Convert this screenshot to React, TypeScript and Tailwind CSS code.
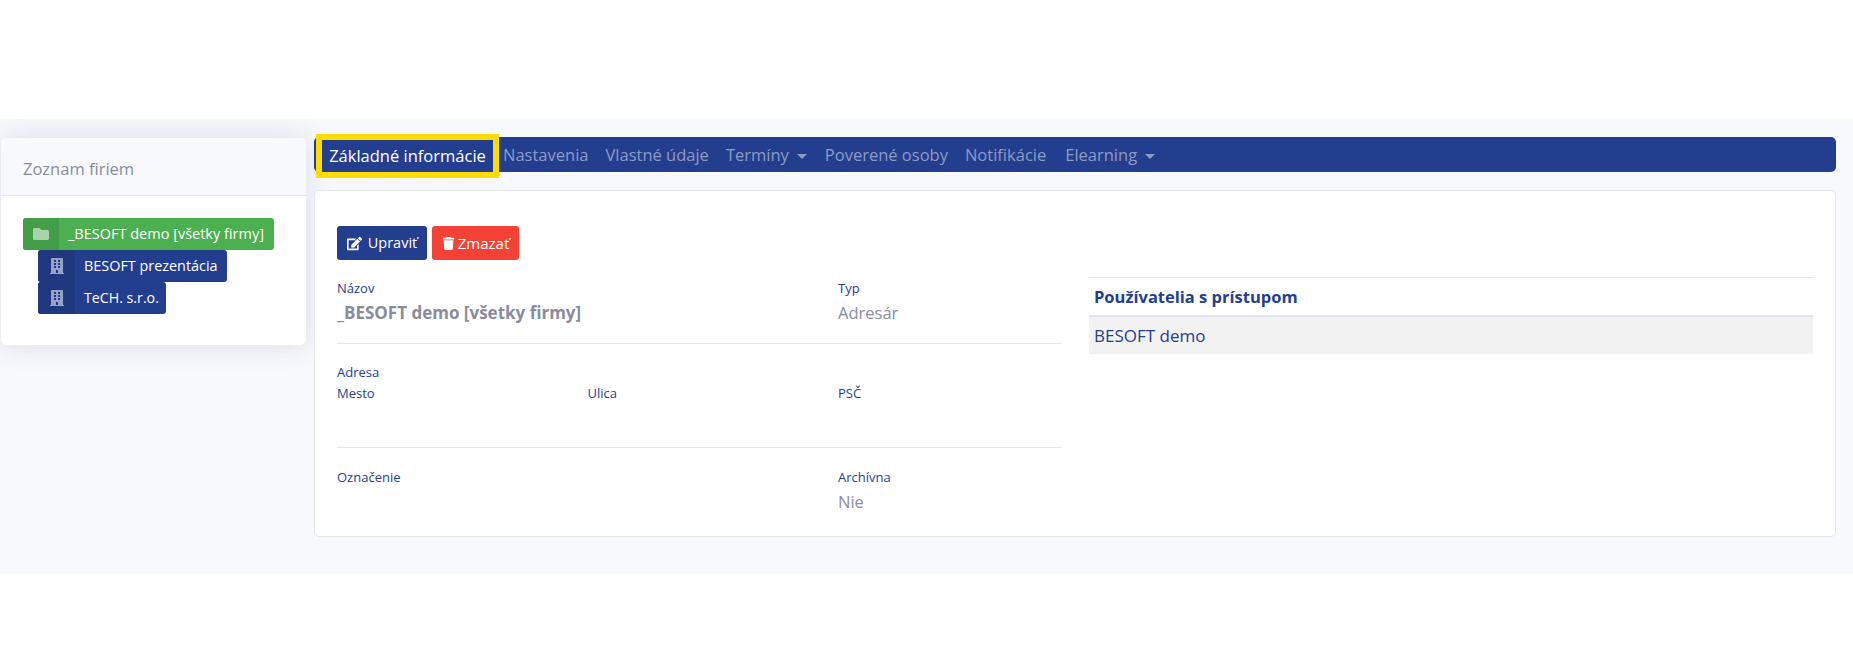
import { FaBuilding, FaEdit, FaFolder, FaTrash } from 'react-icons/fa';

const font = "font-['Open_Sans',sans-serif]";

function TreeItem({ label, green, className }: { label: string; green?: boolean; className: string }) {
  return (
    <div className={`flex h-8 items-center overflow-hidden rounded-[3px] text-white ${className}`}>
      <span className={`flex h-full items-center justify-center ${green ? 'w-9 bg-[#449d48] text-[#a9d3aa]' : 'w-[37px] bg-[#20387f] text-[#97a3c6]'}`}>
        {green ? <FaFolder className="text-[16px]" /> : <FaBuilding className="text-[16px]" />}
      </span>
      <span className="pl-[9px]">{label}</span>
    </div>
  );
}

function Field({ label, value, bold, className }: { label: string; value?: string; bold?: boolean; className?: string }) {
  return (
    <div className={className}>
      <div className="text-[13px] leading-[19px] text-[#243e8f]">{label}</div>
      {value && <div className={`leading-[29px] text-[#8a8c9c] ${bold ? 'text-[17px] font-bold' : 'text-[16.5px]'}`}>{value}</div>}
    </div>
  );
}

function Caret() {
  return <span className="ml-2 inline-block border-x-[5px] border-t-[5px] border-x-transparent border-t-[#8d9ac4] align-middle" />;
}

export default function App() {
  return (
    <div className={`min-h-[672px] bg-white pt-[119px] ${font}`}>
      <div className="flex h-[455px] items-start bg-[#f8f9fd] pl-px pr-[17px] pt-[15px]">
        {/* Zoznam firiem */}
        <aside className="mt-[4px] h-[207px] w-[305px] shrink-0 rounded-[5px] bg-white shadow-[0_0_28px_rgba(60,60,110,0.16)]">
          <div className="flex h-[58px] items-center rounded-t-[5px] border-b border-[#e4e5ef] bg-[#f8f9fd] pl-[22px] pt-[5px] text-[16.5px] text-[#8a8c9c]">
            Zoznam firiem
          </div>
          <div className="pl-[22px] pt-[22px]">
            <TreeItem className="w-[251px] bg-[#4caf50] text-[14.5px]" label="_BESOFT demo [všetky firmy]" green />
            <TreeItem className="ml-[15px] w-[189px] bg-[#243e8f] text-[14.4px]" label="BESOFT prezentácia" />
            <TreeItem className="ml-[15px] w-[128px] bg-[#243e8f] text-[14.2px]" label="TeCH. s.r.o." />
          </div>
        </aside>

        <main className="ml-[8px] flex-1">
          {/* Navbar */}
          <nav className="mt-[3px] flex h-[35px] items-center rounded-[5px] bg-[#243e8f] pl-[2px] pt-px text-[16.5px] text-[#8d9ac4]">
            <a className="mt-[2px] flex h-[44px] w-[183px] shrink-0 items-center justify-center border-[6px] border-[#ffdd00] text-white">Základné informácie</a>
            <a className="ml-[4px]">Nastavenia</a>
            <a className="ml-[17px]">Vlastné údaje</a>
            <a className="ml-[17px]">Termíny<Caret /></a>
            <a className="ml-[18px]">Poverené osoby</a>
            <a className="ml-[17px]">Notifikácie</a>
            <a className="ml-[19px]">Elearning<Caret /></a>
          </nav>

          {/* Detail */}
          <section className="mt-[18px] flex h-[347px] rounded-[5px] border border-[#e4e5ef] bg-white pl-[22px] pr-[22px] pt-[35px]">
            <div className="w-[725px] shrink-0">
              <div className="flex gap-[5px]">
                <button className="flex h-[34px] w-[90px] items-center justify-center gap-[6px] rounded-[3px] bg-[#243e8f] text-[14.5px] text-white">
                  <FaEdit className="text-[15px]" />Upraviť
                </button>
                <button className="flex h-[34px] w-[87px] items-center justify-center gap-[3px] rounded-[3px] bg-[#f44336] text-[15px] text-white">
                  <FaTrash className="text-[13px]" />Zmazať
                </button>
              </div>
              <div className="mt-[19px] grid grid-cols-[250.5px_250.5px_1fr] border-b border-[#e4e5ef] pb-[16px]">
                <Field className="col-span-2" label="Názov" value="_BESOFT demo [všetky firmy]" bold />
                <Field label="Typ" value="Adresár" />
              </div>
              <div className="border-b border-[#e4e5ef] pb-[44px] pt-[19px]">
                <Field label="Adresa" />
                <div className="mt-[2px] grid grid-cols-[250.5px_250.5px_1fr]">
                  <Field label="Mesto" />
                  <Field label="Ulica" />
                  <Field label="PSČ" />
                </div>
              </div>
              <div className="grid grid-cols-[250.5px_250.5px_1fr] pt-[20px]">
                <Field className="col-span-2" label="Označenie" />
                <Field label="Archívna" value="Nie" />
              </div>
            </div>
            <div className="ml-[27px] mt-[51px] flex-1">
              <div className="flex h-[40px] items-center border-y border-b-2 border-[#e4e5ef] pl-[5px] pt-px text-[16.5px] font-bold text-[#243e8f]">
                Používatelia s prístupom
              </div>
              <div className="flex h-[37px] items-center bg-[#f2f2f2] pl-[5px] pt-px text-[17px] text-[#243e8f]">BESOFT demo</div>
            </div>
          </section>
        </main>
      </div>
    </div>
  );
}
